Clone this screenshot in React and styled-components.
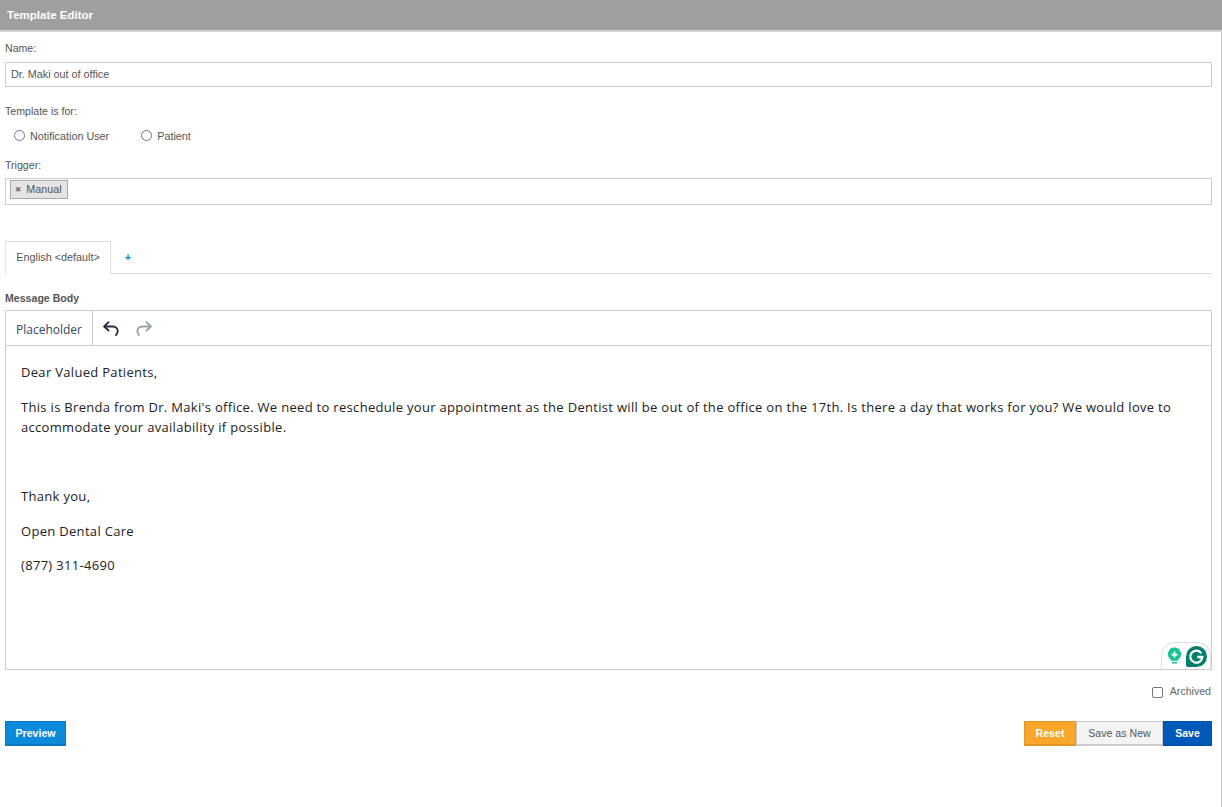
import React from "react";
import styled, { createGlobalStyle } from "styled-components";

const GlobalStyle = createGlobalStyle`
  html, body { margin: 0; padding: 0; background: #fff; }
  body { font-family: "Liberation Sans", Arial, sans-serif; font-size: 10.8px; color: #555; }
`;

const Page = styled.div`
  display: flex;
  flex-direction: column;
  width: 1222px;
  height: 807px;
  overflow: hidden;
`;

const Header = styled.header`
  height: 30px;
  line-height: 30px;
  padding-left: 7px;
  background: #a09f9d;
  border-bottom: 2px solid #d4d4d4;
  color: #fff;
  font-size: 11.5px;
  font-weight: 700;
`;

const Body = styled.div`
  flex: 1;
  padding: 0 9px 0 5px;
  border-right: 1px solid #ccc;
`;

const Label = styled.div`
  height: 12px;
  line-height: 12px;
  margin-top: ${(p) => p.$top}px;
  color: #555;
  font-size: 10.6px;
  font-weight: ${(p) => (p.$bold ? 700 : 400)};
`;

const TextBox = styled.div`
  height: 23px;
  line-height: 23px;
  margin-top: 8px;
  padding-left: 5px;
  border: 1px solid #ccc;
  color: #555;
  font-size: 10.8px;
`;

const RadioRow = styled.div`
  display: flex;
  margin-top: 11px;
  padding-left: 9px;
  height: 14px;
  align-items: center;
`;

const RadioItem = styled.label`
  display: flex;
  align-items: center;
  gap: 5px;
  margin-right: 32px;
  color: #555;
  font-size: 10.8px;
`;

const RadioText = styled.span`
  padding-top: 2px;
`;

const RadioDot = styled.span`
  width: 11px;
  height: 11px;
  box-sizing: border-box;
  border: 1px solid #767676;
  border-radius: 50%;
`;

const TagBox = styled.div`
  margin-top: 7px;
  padding: 1px 4px 3px;
  height: 21px;
  border: 1px solid #ccc;
`;

const Tag = styled.span`
  display: flex;
  width: fit-content;
  align-items: center;
  box-sizing: border-box;
  height: 19px;
  padding: 0 5px 2px 4px;
  gap: 5px;
  background: #e4e4e4;
  border: 1px solid #aaa;
  color: #555;
  font-size: 10.8px;
`;

const TagClose = styled.span`
  color: #777;
  font-family: "DejaVu Sans", sans-serif;
  font-size: 7.5px;
  padding-top: 2px;
`;

const Tabs = styled.div`
  display: flex;
  align-items: stretch;
  height: 32px;
  margin-top: 36px;
  border-bottom: 1px solid #ddd;
`;

const Tab = styled.div`
  width: 104px;
  height: 32px;
  line-height: 31px;
  text-align: center;
  border: 1px solid #ddd;
  border-bottom: none;
  background: #fff;
  color: #555;
  font-size: 10.8px;
`;

const AddTab = styled.div`
  width: 34px;
  line-height: 34px;
  text-align: center;
  color: #0a78c2;
  font-size: 10px;
  font-weight: 700;
`;

const Editor = styled.div`
  height: 358px;
  margin-top: 6px;
  border: 1px solid #ccc;
  position: relative;
`;

const EditorBar = styled.div`
  display: flex;
  align-items: center;
  height: 34px;
  border-bottom: 1px solid #ccc;
`;

const PlaceholderBtn = styled.div`
  height: 35px;
  line-height: 37px;
  padding: 0 10px;
  border-right: 1px solid #ccc;
  color: #34495e;
  font-family: "Open Sans", sans-serif;
  font-size: 12px;
  align-self: flex-start;
`;

const IconBtn = styled.button`
  display: flex;
  padding: 0;
  margin-left: ${(p) => p.$left}px;
  background: none;
  border: 0;
  color: ${(p) => p.$color};
`;

const Content = styled.div`
  padding: 16px 15px 0;
  color: #222;
  font-family: "Open Sans", sans-serif;
  font-size: 13px;
  line-height: 20px;
  letter-spacing: 0.31px;
`;

const Para = styled.p`
  margin: 0 0 ${(p) => p.$after || 15}px;
`;

const GrammarlyBadge = styled.div`
  position: absolute;
  right: 0;
  bottom: 0;
  width: 50px;
  height: 27px;
  box-sizing: border-box;
  display: flex;
  align-items: center;
  justify-content: flex-end;
  gap: 4px;
  padding-right: 3px;
  background: #fff;
  border: 1px solid #d8e3e3;
  border-bottom: none;
  border-radius: 14px 14px 0 0;
`;

const ArchivedRow = styled.div`
  display: flex;
  justify-content: flex-end;
  align-items: center;
  gap: 7px;
  height: 14px;
  margin-top: 14px;
  padding-right: 1px;
  color: #666;
  font-size: 10.6px;
`;

const CheckBox = styled.span`
  width: 11px;
  height: 11px;
  margin-top: 2px;
  box-sizing: border-box;
  border: 1px solid #767676;
  border-radius: 2px;
`;

const Actions = styled.div`
  display: flex;
  justify-content: space-between;
  margin-top: 23px;
`;

const ButtonGroup = styled.div`
  display: flex;
`;

const Button = styled.button`
  height: 25px;
  padding: 0;
  width: ${(p) => p.$w}px;
  box-sizing: border-box;
  font-family: "Liberation Sans", Arial, sans-serif;
  font-size: 10.6px;
  font-weight: ${(p) => (p.$light ? 400 : 700)};
  color: ${(p) => (p.$light ? "#555" : "#fff")};
  background: ${(p) => p.$bg};
  border: 1px solid ${(p) => p.$border};
  border-bottom-width: 2px;
`;

const LightbulbIcon = () => (
  <svg width="15" height="18" viewBox="0 0 16 19">
    <path d="M8 0.500a7 7 0 0 1 4.400 12.400c-.6.500-.9 1-.9 1.600H4.500c0-.6-.3-1.100-.9-1.600A7 7 0 0 1 8 .500z" fill="#15c39a" />
    <path d="M7 4.800h2v2.200h2.200v2H9v2.200H7V9H4.800V7H7z" fill="#fff" />
    <rect x="5" y="15.600" width="6" height="1.800" rx=".9" fill="#15c39a" />
  </svg>
);

const GrammarlyIcon = () => (
  <svg width="21" height="21" viewBox="0 0 21 21">
    <path d="M10.500 0a10.500 10.500 0 0 1 0 21H2a2 2 0 0 1-2-2v-8.500A10.500 10.500 0 0 1 10.500 0z" fill="#027e6f" />
    <path d="M15.300 7.300A6 6 0 1 0 16.300 11h-5" fill="none" stroke="#fff" strokeWidth="2.300" />
  </svg>
);

const UndoIcon = () => (
  <svg width="16" height="15" viewBox="0 0 16 15" fill="none" stroke="currentColor" strokeWidth="1.800" strokeLinecap="round" strokeLinejoin="round">
    <path d="M5.500 1.200 1.200 5.500l4.300 4" />
    <path d="M1.500 5.500h8.500c2.900 0 4.700 2 4.700 4.500 0 1.800-.7 3-1.700 4" />
  </svg>
);

const RedoIcon = () => (
  <svg width="16" height="15" viewBox="0 0 16 15" fill="none" stroke="currentColor" strokeWidth="1.800" strokeLinecap="round" strokeLinejoin="round">
    <path d="M10.500 1.200l4.300 4.300-4.300 4" />
    <path d="M14.500 5.500H6c-2.900 0-4.700 2-4.700 4.500 0 1.800.7 3 1.700 4" />
  </svg>
);

const App = () => {
  return (
    <Page>
      <GlobalStyle />
      <Header>Template Editor</Header>
      <Body>
        <Label $top={10}>Name:</Label>
        <TextBox>Dr. Maki out of office</TextBox>
        <Label $top={18}>Template is for:</Label>
        <RadioRow>
          <RadioItem>
            <RadioDot />
            <RadioText>Notification User</RadioText>
          </RadioItem>
          <RadioItem>
            <RadioDot />
            <RadioText>Patient</RadioText>
          </RadioItem>
        </RadioRow>
        <Label $top={17}>Trigger:</Label>
        <TagBox>
          <Tag>
            <TagClose>✖</TagClose>
            Manual
          </Tag>
        </TagBox>
        <Tabs>
          <Tab>English &lt;default&gt;</Tab>
          <AddTab>+</AddTab>
        </Tabs>
        <Label $top={18} $bold>Message Body</Label>
        <Editor>
          <EditorBar>
            <PlaceholderBtn>Placeholder</PlaceholderBtn>
            <IconBtn $left={10} $color="#222f3e"><UndoIcon /></IconBtn>
            <IconBtn $left={17} $color="#98a2ab"><RedoIcon /></IconBtn>
          </EditorBar>
          <Content>
            <Para>Dear Valued Patients,</Para>
            <Para $after={49}>
              This is Brenda from Dr. Maki's office. We need to reschedule your appointment as the Dentist will be out of the office on the 17th. Is there a day that works for you? We would love to accommodate your availability if possible.
            </Para>
            <Para>Thank you,</Para>
            <Para $after={14}>Open Dental Care</Para>
            <Para>(877) 311-4690</Para>
          </Content>
          <GrammarlyBadge>
            <LightbulbIcon />
            <GrammarlyIcon />
          </GrammarlyBadge>
        </Editor>
        <ArchivedRow>
          <CheckBox />
          Archived
        </ArchivedRow>
        <Actions>
          <Button $w={61} $bg="#0a8ad8" $border="#0a78bd">Preview</Button>
          <ButtonGroup>
            <Button $w={52} $bg="#f9a72b" $border="#e3962a">Reset</Button>
            <Button $w={87} $light $bg="#f4f4f4" $border="#ccc">Save as New</Button>
            <Button $w={49} $bg="#0059b8" $border="#0052a8">Save</Button>
          </ButtonGroup>
        </Actions>
      </Body>
    </Page>
  );
};

export default App;
